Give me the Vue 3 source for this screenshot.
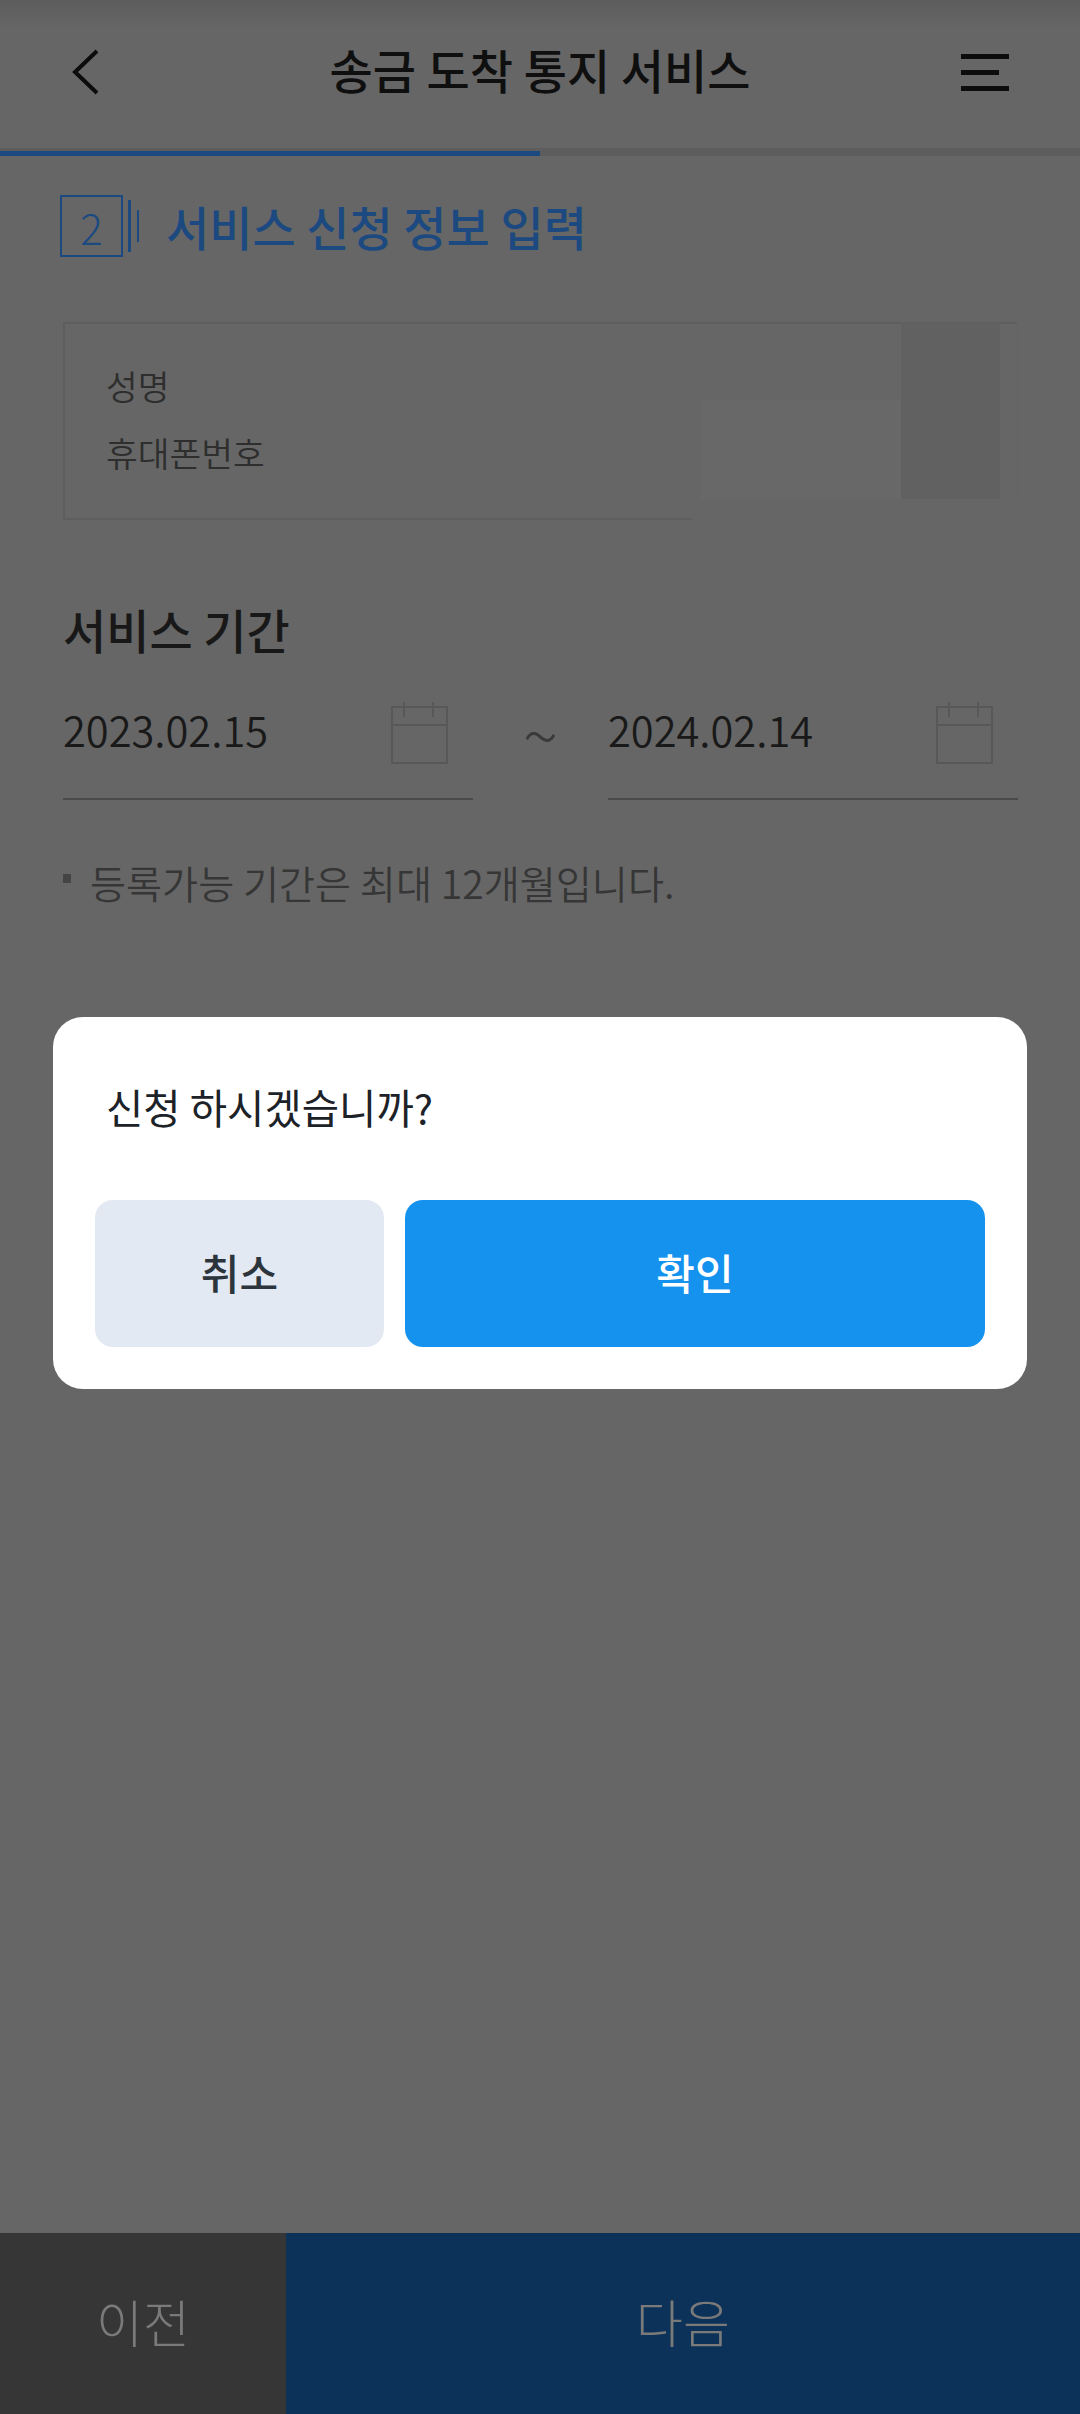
<template>
  <div class="page">
    <header class="top-bar">
      <button type="button" class="icon-btn">
        <svg width="30" height="46" viewBox="0 0 30 46" fill="none">
          <path d="M26 2 L4 23 L26 44" stroke="#0c0c0c" stroke-width="4" />
        </svg>
      </button>
      <h1 class="top-title">송금 도착 통지 서비스</h1>
      <button type="button" class="menu-btn">
        <span class="menu-line"></span>
        <span class="menu-line short"></span>
        <span class="menu-line"></span>
      </button>
    </header>
    <div class="progress"><div class="progress-fill" :style="{ width: progress + 'px' }"></div></div>

    <main class="content">
      <div class="step">
        <span class="step-box">2</span>
        <span class="step-line long"></span>
        <span class="step-line"></span>
        <h2 class="step-title">서비스 신청 정보 입력</h2>
      </div>

      <section class="info-card">
        <p class="info-row">성명</p>
        <p class="info-row">휴대폰번호</p>
        <div class="mask mask-a"></div>
        <div class="mask mask-b"></div>
        <div class="mask mask-c"></div>
      </section>

      <h3 class="section-title">서비스 기간</h3>
      <div class="dates">
        <template v-for="(d, i) in dates" :key="d">
          <span v-if="i" class="tilde">~</span>
          <div class="date-field">
            <span class="date-text">{{ d }}</span>
            <svg class="cal" width="58" height="62" viewBox="0 0 58 62" fill="none" stroke="#585858" stroke-width="2">
              <rect x="2" y="5" width="55" height="56" />
              <path d="M2 23 H57 M14 0 V15 M43 0 V15" />
            </svg>
          </div>
        </template>
      </div>
      <p class="note"><span class="note-dot"></span>등록가능 기간은 최대 12개월입니다.</p>
    </main>

    <footer class="bottom-bar">
      <button type="button" class="btn-prev">이전</button>
      <button type="button" class="btn-next">다음</button>
    </footer>

    <div class="overlay">
      <div class="dialog">
        <p class="dialog-msg">신청 하시겠습니까?</p>
        <div class="dialog-actions">
          <button type="button" class="btn-cancel">취소</button>
          <button type="button" class="btn-ok">확인</button>
        </div>
      </div>
    </div>
  </div>
</template>

<script setup>
const progress = 540;
const dates = ["2023.02.15", "2024.02.14"];
</script>

<style>
body {
  margin: 0;
  background: #666;
}
</style>

<style scoped>
.page {
  position: relative;
  display: flex;
  flex-direction: column;
  width: 1080px;
  height: 2414px;
  overflow: hidden;
  background: #666;
  font-family: "Noto Sans CJK KR", "Noto Sans", sans-serif;
  color: #1a1a1a;
}
button {
  font-family: inherit;
  border: 0;
  padding: 0;
  cursor: pointer;
}
h1, h2, h3, p {
  margin: 0;
}
.top-bar {
  display: flex;
  align-items: center;
  justify-content: space-between;
  height: 148px;
  padding: 0 71px 4px 71px;
  box-sizing: border-box;
  background: linear-gradient(#5d5d5d, #666 30px);
}
.icon-btn {
  display: flex;
  width: 48px;
  background: none;
}
.top-title {
  margin-top: -6px;
  font-size: 47px;
  font-weight: 500;
  line-height: 60px;
  color: #0f0f0f;
}
.menu-btn {
  display: flex;
  flex-direction: column;
  gap: 11px;
  width: 48px;
  background: none;
}
.menu-line {
  display: block;
  width: 48px;
  height: 5px;
  background: #0c0c0c;
}
.menu-line.short {
  width: 38px;
}
.progress {
  height: 8px;
  background: #5d5d5d;
}
.progress-fill {
  height: 5px;
  position: relative;
  top: 3px;
  background: #1c4a80;
}
.content {
  flex: 1;
  padding: 39px 62px 0 63px;
}
.step {
  display: flex;
  align-items: center;
  height: 62px;
  margin-left: -3px;
}
.step-box {
  display: flex;
  align-items: center;
  justify-content: center;
  box-sizing: border-box;
  width: 63px;
  height: 62px;
  border: 2px solid #1c4a80;
  font-size: 42px;
  font-weight: 300;
  color: #1c4a80;
}
.step-line {
  width: 2px;
  height: 32px;
  margin-left: 6px;
  background: #1c4a80;
}
.step-line.long {
  height: 52px;
  width: 3px;
  margin-left: 5px;
}
.step-title {
  margin-left: 27px;
  font-size: 47px;
  font-weight: 500;
  line-height: 60px;
  color: #1c4a80;
}
.info-card {
  position: relative;
  box-sizing: border-box;
  height: 198px;
  margin-top: 65px;
  padding: 28px 0 0 41px;
  border: 2px solid #5e5e5e;
  border-right-color: #656565;
}
.info-row {
  font-size: 34.5px;
  font-weight: 350;
  line-height: 67px;
  color: #2e2e2e;
}
.mask {
  position: absolute;
}
.mask-a {
  left: 636px;
  top: 76px;
  width: 200px;
  height: 99px;
  background: #686868;
}
.mask-b {
  left: 836px;
  top: -1px;
  width: 99px;
  height: 176px;
  background: #616161;
}
.mask-c {
  left: 627px;
  top: 175px;
  width: 350px;
  height: 28px;
  background: #666;
}
.section-title {
  margin-top: 81px;
  font-size: 47px;
  font-weight: 500;
  line-height: 56px;
  color: #181818;
}
.dates {
  display: flex;
  margin-top: 43px;
}
.date-field {
  flex: 1;
  display: flex;
  justify-content: space-between;
  box-sizing: border-box;
  height: 100px;
  padding: 0 25px 32px 0;
  border-bottom: 2px solid #4a4a4a;
}
.date-text {
  margin-top: -4px;
  font-size: 41.6px;
  font-weight: 350;
  line-height: 66px;
  color: #191919;
}
.cal {
  margin-top: 2px;
}
.tilde {
  width: 135px;
  text-align: center;
  font-size: 66px;
  font-weight: 300;
  line-height: 64px;
  color: #3a3a3a;
}
.note {
  display: flex;
  align-items: center;
  margin-top: 57px;
  font-size: 39.2px;
  font-weight: 350;
  line-height: 50px;
  color: #363636;
}
.note-dot {
  width: 8px;
  height: 9px;
  margin: 0 19px 8px 0;
  background: #444;
}
.bottom-bar {
  display: flex;
  height: 181px;
}
.btn-prev,
.btn-next {
  padding-bottom: 6px;
  font-size: 51px;
  font-weight: 300;
  color: #7a7a7a;
}
.btn-prev {
  width: 286px;
  background: #363636;
}
.btn-next {
  flex: 1;
  background: #0c3259;
}
.overlay {
  position: absolute;
  inset: 0;
  padding: 1017px 0 0 53px;
  pointer-events: none;
}
.dialog {
  box-sizing: border-box;
  width: 974px;
  height: 372px;
  padding: 0 42px 0 42px;
  border-radius: 30px;
  background: #fff;
}
.dialog-msg {
  padding: 60px 0 0 11px;
  font-size: 40.6px;
  line-height: 60px;
  color: #1c2228;
}
.dialog-actions {
  display: flex;
  gap: 21px;
  margin-top: 63px;
}
.btn-cancel,
.btn-ok {
  height: 147px;
  padding-bottom: 5px;
  border-radius: 18px;
  font-size: 42px;
  font-weight: 500;
}
.btn-cancel {
  width: 289px;
  background: #e3e9f2;
  color: #2c343c;
}
.btn-ok {
  flex: 1;
  background: #1492ee;
  color: #fff;
}
</style>
